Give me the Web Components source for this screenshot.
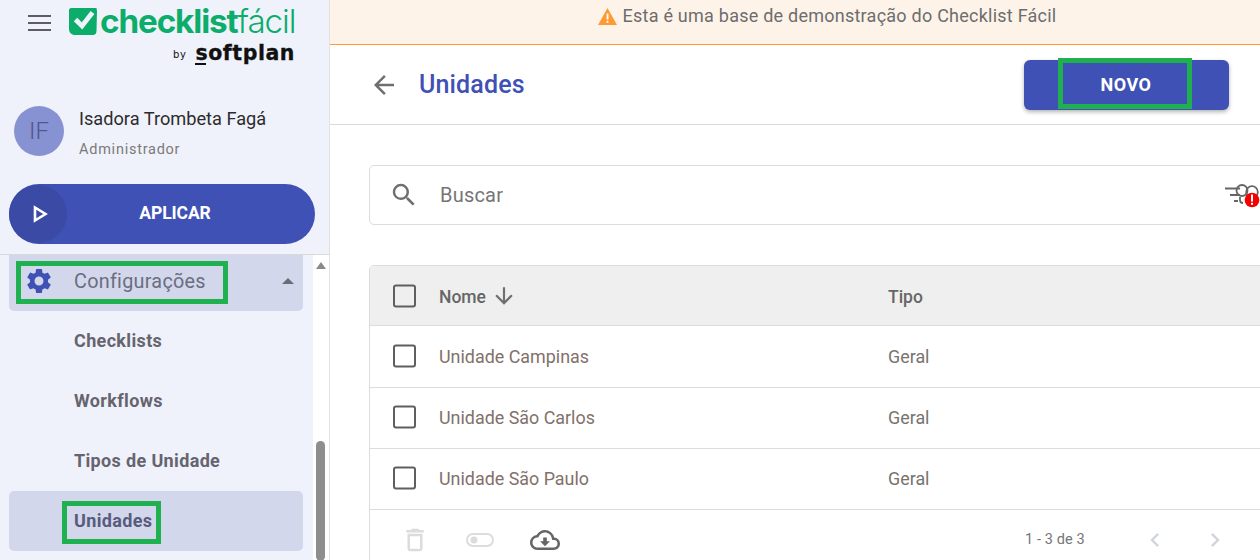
<!DOCTYPE html>
<html lang="pt-BR"><head><meta charset="utf-8"><title>Unidades</title>
<style>
html,body{margin:0;padding:0;width:1260px;height:560px;overflow:hidden;background:#fff;font-family:Roboto,"Liberation Sans",sans-serif;}
app-shell{width:1260px;height:560px;}
</style></head><body>
<app-shell>
  <side-bar slot="side">
    <user-card slot="head" name="Isadora Trombeta Fagá" role="Administrador" initials="IF"></user-card>
    <nav-item slot="menu" kind="parent" marked>Configurações</nav-item>
    <nav-item slot="menu">Checklists</nav-item>
    <nav-item slot="menu">Workflows</nav-item>
    <nav-item slot="menu">Tipos de Unidade</nav-item>
    <nav-item slot="menu" active marked>Unidades</nav-item>
  </side-bar>
  <demo-banner slot="main">Esta é uma base de demonstração do Checklist Fácil</demo-banner>
  <page-head slot="main" title-text="Unidades" action="NOVO"></page-head>
  <search-box slot="main" placeholder="Buscar"></search-box>
  <data-table slot="main">
    <table-row slot="rows" name="Unidade Campinas" type="Geral"></table-row>
    <table-row slot="rows" name="Unidade São Carlos" type="Geral"></table-row>
    <table-row slot="rows" name="Unidade São Paulo" type="Geral"></table-row>
  </data-table>
</app-shell>

<script>
const define=(name,css,html,setup)=>{
  customElements.define(name,class extends HTMLElement{
    connectedCallback(){
      if(this.shadowRoot)return;
      const r=this.attachShadow({mode:'open'});
      const a=n=>this.getAttribute(n)||'';
      r.innerHTML=`<style>${css}</style>${typeof html==='function'?html(a,this):html}`;
      if(setup)setup(r,this);
    }
  });
};
const CHECK=`<svg width="24" height="24" viewBox="0 0 24 24"><rect x="1" y="1.500" width="21" height="21" rx="2" fill="none" stroke="#5f5f5f" stroke-width="2"/></svg>`;

define('app-shell',`
:host{display:flex;overflow:hidden}
.side{flex:0 0 330px;display:flex}
.main{flex:1 1 auto;min-width:0;display:flex;flex-direction:column}
`,`<div class="side"><slot name="side"></slot></div><div class="main"><slot name="main"></slot></div>`);

define('side-bar',`
:host{display:flex;flex-direction:column;width:329px;height:560px;background:#f0f2fb;border-right:1px solid #e2e2e2;overflow:hidden}
.top{height:254px;flex:none;border-bottom:1px solid #d9d9d9;display:flex;flex-direction:column;box-sizing:content-box}
.brand{height:70px;display:flex;align-items:flex-start;flex:none}
.burger{margin:15px 0 0 28px;width:23px;display:flex;flex-direction:column;gap:5px;flex:none}
.burger i{display:block;height:2px;background:#5c5c66}
.logo{margin:8px 0 0 18px;width:226px;display:flex;flex-direction:column;align-items:flex-end;flex:none}
.word{display:flex;align-items:center;height:27px;width:226px;overflow:visible}
.word b,.word span{font-family:Inter,Roboto,sans-serif;font-size:33.200px;line-height:27px;color:#0cad6b;letter-spacing:-1.100px;white-space:nowrap}
.word b{font-weight:700;margin-left:3px}
.word span{font-weight:300}
.by{display:flex;align-items:center;gap:9px;height:20px;margin-top:8px;color:#111}
.by small{font:500 10px/12px "DejaVu Sans",sans-serif;letter-spacing:.6px;margin-top:3px}
.by strong{font:700 20.500px/20px "DejaVu Sans",sans-serif;letter-spacing:.55px;color:#111;margin-right:0;position:relative;-webkit-text-stroke:.3px #111}
.by strong::after{content:"";position:absolute;left:0;bottom:-2px;width:11px;height:2px;background:#111}
.apply{margin:0 0 0 9px;width:306px;height:60px;border-radius:30px;background:#3f51b5;display:flex;align-items:center;position:relative;flex:none;margin-top:auto;margin-bottom:10px}
.apply .knob{width:58px;height:58px;border-radius:50%;background:#3a4aa5;display:flex;align-items:center;justify-content:center;padding-left:4px;box-sizing:border-box;flex:none}
.apply span{position:absolute;left:0;right:0;top:18px;padding-left:26px;text-align:center;color:#fff;font-weight:700;font-size:17.500px;line-height:22px;letter-spacing:-.1px}
.body{flex:1;display:flex;min-height:0}
.list{width:313px;flex:none;box-sizing:border-box;padding:0 10px 0 9px;display:flex;flex-direction:column;background:#f0f2fb}
.track{width:16px;flex:none;background:#fff;position:relative;display:flex;flex-direction:column;align-items:center}
.up{width:0;height:0;border-left:5px solid transparent;border-right:5px solid transparent;border-bottom:7px solid #8a8a8a;margin-top:7px}
.thumb{position:absolute;left:3px;top:186px;width:9px;height:120px;border-radius:5px;background:#8e8e8e}
`,`<div class="top">
  <div class="brand">
    <div class="burger"><i></i><i></i><i></i></div>
    <div class="logo">
      <div class="word">
        <svg width="28" height="27" viewBox="0 0 28 27" style="flex:none"><path d="M2 0H27.500L28 3L27.500 23C27.500 25.500 26 27 24 27H6C2.500 27 0 24.500 0 21V2C0 1 1 0 2 0Z" fill="#0cad6b"/><path d="M6.500 11.500L13 18L23.500 4.500" fill="none" stroke="#f0f2fb" stroke-width="4.800"/></svg>
        <b>checklist</b><span>fácil</span>
      </div>
      <div class="by"><small>by</small><strong>softplan</strong></div>
    </div>
  </div>
  <slot name="head"></slot>
  <div class="apply"><div class="knob"><svg width="16" height="18" viewBox="0 0 16 18"><path d="M3 2.500V15.500L13.500 9Z" fill="none" stroke="#fff" stroke-width="2.600"/></svg></div><span>APLICAR</span></div>
</div>
<div class="body"><div class="list"><slot name="menu"></slot></div><div class="track"><div class="up"></div><div class="thumb"></div></div></div>`);

define('user-card',`
:host{display:flex;align-items:center;height:50px;margin:36px 0 0 14px;flex:none}
.av{width:50px;height:50px;border-radius:50%;background:#8792d2;color:#4d5790;display:flex;align-items:center;justify-content:center;font-size:24px;font-weight:300;flex:none}
.tx{margin-left:15px;display:flex;flex-direction:column}
.n{font-size:18.200px;line-height:24px;color:#2c2c2c;margin-top:3px}
.r{font-size:14.500px;line-height:18px;color:#7a7a7a;letter-spacing:.75px;margin-top:10px}
`,a=>`<div class="av">${a('initials')}</div><div class="tx"><span class="n">${a('name')}</span><span class="r">${a('role')}</span></div>`);

define('nav-item',`
:host{display:flex;align-items:center;height:60px;border-radius:5px;position:relative;flex:none;color:#66646e;font-weight:700;font-size:18px;padding:0 0 2px 65px;box-sizing:border-box;letter-spacing:.35px}
:host([active]){background:#d2d7ec;color:#585b7c}
:host([kind=parent]){height:56px;background:#d2d7ec;font-weight:400;font-size:19.800px;color:#6b6d80;border-radius:0 0 5px 5px;letter-spacing:.28px;padding-bottom:4px}
svg.gear{position:absolute;left:15px;top:11px}
.caret{position:absolute;left:273px;top:23px;width:0;height:0;border-left:6.500px solid transparent;border-right:6.500px solid transparent;border-bottom:6.500px solid #6b6b73}
.mark{position:absolute;border:5px solid #1fb14f;box-sizing:border-box;pointer-events:none}
`,(a,el)=>{
  const parent=a('kind')==='parent';
  const mark=el.hasAttribute('marked')?(parent?'<div class="mark" style="left:7px;top:6px;width:212px;height:43px"></div>':'<div class="mark" style="left:53px;top:10px;width:99px;height:43px"></div>'):'';
  return (parent?`<svg class="gear" width="30" height="30" viewBox="0 0 24 24"><path fill="#3f51b5" d="M19.140 12.940c.04-.3.060-.61.060-.94 0-.32-.02-.64-.07-.94l2.030-1.580a.49.49 0 0 0 .12-.61l-1.920-3.320a.488.488 0 0 0-.59-.22l-2.390.96c-.5-.38-1.030-.7-1.620-.94l-.36-2.540a.484.484 0 0 0-.48-.41h-3.840c-.24 0-.43.170-.47.41l-.36 2.540c-.59.240-1.130.570-1.620.94l-2.390-.96c-.22-.08-.47 0-.59.220L2.740 8.870c-.12.210-.08.470.12.610l2.030 1.580c-.05.3-.09.630-.09.940s.02.640.07.940l-2.030 1.580a.49.49 0 0 0-.12.610l1.920 3.320c.12.220.37.290.59.220l2.390-.96c.5.380 1.030.7 1.620.94l.36 2.540c.05.240.24.410.48.410h3.840c.24 0 .44-.17.47-.41l.36-2.540c.59-.24 1.130-.56 1.620-.94l2.390.96c.22.080.47 0 .59-.22l1.920-3.320c.12-.22.07-.47-.12-.61l-2.010-1.580zM12 15.600c-1.980 0-3.600-1.620-3.600-3.600s1.620-3.600 3.600-3.600 3.600 1.620 3.600 3.600-1.620 3.600-3.600 3.600z"/></svg><div class="caret"></div>`:'')+`<slot></slot>`+mark;
});

define('demo-banner',`
:host{display:flex;align-items:center;justify-content:center;background:#fef3e9;border-bottom:1px solid #ff9a33;flex:none;font-size:18px;color:#6d6d6d;letter-spacing:.24px;padding:0 0 14px 64px;box-sizing:content-box;height:30px}
svg{margin-right:6px;margin-top:2px}
`,`<svg width="19" height="17" viewBox="0 0 19 17"><path d="M9.500 0L19 17H0Z" fill="#ff9a33"/><rect x="8.600" y="5.500" width="1.900" height="6" fill="#fff"/><rect x="8.600" y="12.800" width="1.900" height="2" fill="#fff"/></svg><slot></slot>`);
</script>
<script>
define('page-head',`
:host{display:flex;align-items:center;height:79px;border-bottom:1px solid #d9d9d9;flex:none;padding-left:40px;position:relative}
svg{flex:none}
h1{margin:0 0 0 20px;font-size:25px;font-weight:500;color:#3f51b5;letter-spacing:.15px}
.btn{position:absolute;left:694px;top:15px;width:205px;height:50px;box-sizing:border-box;padding:0 1px 2px 0;border-radius:6px;background:#3f51b5;color:#fff;font-weight:700;font-size:18px;letter-spacing:.5px;display:flex;align-items:center;justify-content:center;box-shadow:0 2px 4px rgba(0,0,0,.3)}
.mark{position:absolute;left:34px;top:-2px;width:134px;height:51px;border:5px solid #1fb14f;box-sizing:border-box}
`,a=>`<svg width="30" height="30" viewBox="0 0 24 24" style="margin-left:-1px"><path fill="#6f6f6f" d="M20 11H7.830l5.590-5.590L12 4l-8 8 8 8 1.410-1.410L7.830 13H20z"/></svg><h1>${a('title-text')}</h1><div class="btn">${a('action')}<div class="mark"></div></div>`);

define('search-box',`
:host{display:flex;align-items:center;height:58px;margin:40px 0 0 39px;width:1000px;border:1px solid #dcdcdc;border-radius:5px;flex:none;position:relative;background:#fff}
svg.s{margin-left:19px;flex:none}
span{margin-left:21px;font-size:20px;color:#757575;letter-spacing:.2px}
svg.f{position:absolute;left:855px;top:18px}
`,a=>`<svg class="s" width="30" height="30" viewBox="0 0 24 24"><path fill="#6f6f6f" d="M15.500 14h-.79l-.28-.27A6.470 6.470 0 0 0 16 9.500 6.500 6.500 0 1 0 9.500 16c1.610 0 3.090-.59 4.230-1.570l.27.28v.79l5 4.990L20.490 19l-4.990-5zm-6 0C7.010 14 5 11.990 5 9.500S7.010 5 9.500 5 14 7.010 14 9.500 11.990 14 9.500 14z"/></svg><span>${a('placeholder')}</span>
<svg class="f" width="36" height="28" viewBox="0 0 36 28"><g fill="none" stroke="#666" stroke-width="1.800"><path d="M0 4.500H15M5 11H15M9 17H13"/><circle cx="17" cy="6.500" r="5.500"/><circle cx="27" cy="8" r="5.800"/><path d="M15 13v3c0 2 1 3 3 3"/></g><circle cx="27" cy="16" r="7.300" fill="#f40000"/><rect x="26" y="10.500" width="2" height="7" fill="#fff"/><rect x="26" y="18.800" width="2" height="2" fill="#fff"/></svg>`);

define('data-table',`
:host{display:block;margin:40px 0 0 39px;width:1000px;flex:none;border:1px solid #dcdcdc;border-bottom:0;border-radius:5px 5px 0 0;box-sizing:border-box}
.h{display:flex;align-items:center;height:59px;background:#efefef;border-bottom:1px solid #dcdcdc;color:#666;font-size:17.500px;font-weight:500;box-sizing:content-box}
.box{margin-left:23px;display:flex;width:24px;flex:none}
.n{margin-left:22px;width:449px;display:flex;align-items:center;flex:none}
.n svg{margin-left:5px}
.lbl{padding-top:2px}
.rows{padding-top:1px}
.foot{height:50px;display:flex;align-items:center;position:relative;color:#757575}
.foot svg{position:absolute}
.count{position:absolute;left:655px;top:21px;font-size:14.500px;line-height:18px;letter-spacing:.1px}
`,`<div class="h"><span class="box">${CHECK}</span><span class="n"><span class="lbl">Nome</span><svg width="26" height="26" viewBox="0 0 24 24"><path fill="#6f6f6f" d="M20 12l-1.410-1.410L13 16.170V4h-2v12.170l-5.580-5.590L4 12l8 8z"/></svg></span><span class="lbl">Tipo</span></div>
<div class="rows"><slot name="rows"></slot></div>
<div class="foot">
<svg style="left:30px;top:15px" width="30" height="30" viewBox="0 0 24 24"><path fill="#dcdcdc" d="M6 19c0 1.100.9 2 2 2h8c1.100 0 2-.9 2-2V7H6v12zM8 9h8v10H8V9zm7.500-5l-1-1h-5l-1 1H5v2h14V4z"/></svg>
<svg style="left:96px;top:22px" width="28" height="16" viewBox="0 0 28 16"><rect x="1" y="2" width="26" height="12" rx="6" fill="none" stroke="#dcdcdc" stroke-width="2"/><circle cx="8" cy="8" r="3.500" fill="#dcdcdc"/></svg>
<svg style="left:160px;top:15px" width="30" height="30" viewBox="0 0 24 24"><path fill="#666" d="M19.350 10.040A7.490 7.490 0 0 0 12 4C9.110 4 6.600 5.640 5.350 8.040A5.994 5.994 0 0 0 0 14c0 3.310 2.690 6 6 6h13c2.760 0 5-2.240 5-5 0-2.640-2.050-4.780-4.650-4.960zM19 18H6c-2.210 0-4-1.790-4-4 0-2.050 1.530-3.760 3.560-3.970l1.070-.11.5-.95A5.469 5.469 0 0 1 12 6c2.620 0 4.880 1.860 5.390 4.430l.3 1.500 1.530.11A2.980 2.980 0 0 1 22 15c0 1.650-1.350 3-3 3zm-5.550-8h-2.900v3H8l4 4 4-4h-2.550z"/></svg>
<span class="count">1 - 3 de 3</span>
<svg style="left:771px;top:16px" width="28" height="28" viewBox="0 0 24 24"><path fill="#d0d4dc" d="M15.410 7.410L14 6l-6 6 6 6 1.410-1.410L10.830 12z"/></svg>
<svg style="left:831px;top:16px" width="28" height="28" viewBox="0 0 24 24"><path fill="#d0d4dc" d="M8.590 16.590L10 18l6-6-6-6-1.410 1.410L13.170 12z"/></svg>
</div>`);

define('table-row',`
:host{display:flex;align-items:center;height:58px;padding-bottom:2px;border-bottom:1px solid #dcdcdc;font-size:17.900px;color:#82706a;box-sizing:content-box}
.box{margin-left:23px;display:flex;width:24px;flex:none}
.n{margin-left:22px;width:449px;flex:none}
.t{color:#77736e}
`,a=>`<span class="box">${CHECK}</span><span class="n">${a('name')}</span><span class="t">${a('type')}</span>`);
</script>
</body></html>
